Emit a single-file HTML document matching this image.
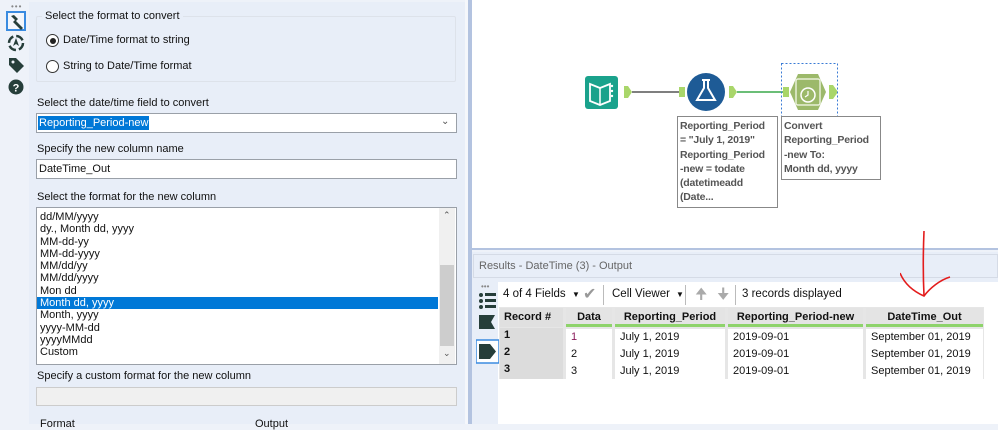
<!DOCTYPE html>
<html><head><meta charset="utf-8"><style>
*{margin:0;padding:0;box-sizing:border-box}
body{width:998px;height:424px;overflow:hidden;background:#eef2f9;font-family:"Liberation Sans",sans-serif;font-size:11px;color:#111;position:relative}
.a{position:absolute}
.lbl{position:absolute;left:37px;font-size:11px}
.box{position:absolute;background:#fff;border:1px solid #9aa0a8}
.li{height:12.3px;line-height:12.3px;padding-left:3px;font-size:11px}
.cell{position:absolute;height:17px;line-height:17px;padding-left:5px;background:#fff;font-size:11px}
.hd{position:absolute;height:19px;line-height:18px;text-align:center;background:#e4e4e4;font-weight:bold;border-bottom:3px solid #8ed36b;font-size:11px}
.rn{position:absolute;height:17px;line-height:15px;padding-left:4px;background:#dcdcdc;font-weight:bold;font-size:11px}
.note{position:absolute;background:#fff;border:1px solid #888;color:#555;font-weight:bold;font-size:10.5px;line-height:14.3px;padding:2px 2px;letter-spacing:-0.2px;white-space:nowrap;overflow:hidden}
</style></head><body>
<div class="a" style="left:0;top:0;width:30px;height:424px;background:#eef2f9"></div>
<div class="a" style="left:11px;top:2px;color:#888;font-size:8px;letter-spacing:1px">•••</div>
<div class="a" style="left:6px;top:11px;width:20px;height:20px;border:2px solid #3a8be0;background:#f3f6fb"></div>
<svg class="a" style="left:6px;top:11px" width="22" height="90" viewBox="0 0 22 90">
<path d="M5 5 l3 -1 4 4 -2 2 -4 -4z M9 9 l8 8 -2 2 -8 -8z" fill="#263e3a"/>
<circle cx="10" cy="32" r="7" fill="none" stroke="#263e3a" stroke-width="2.5" stroke-dasharray="8 3"/>
<path d="M7 35 l3 -8 3 8 -3 -2z" fill="#263e3a"/>
<path d="M3 47 l7 0 8 8 -7 7 -8 -8z" fill="#263e3a"/><circle cx="7" cy="51" r="1.5" fill="#eef2f9"/>
<circle cx="10" cy="76" r="7.5" fill="#263e3a"/><text x="10" y="80.5" font-size="11" font-weight="bold" fill="#fff" text-anchor="middle" font-family="Liberation Sans">?</text>
</svg>
<div class="a" style="left:29px;top:2px;width:436px;height:422px;background:#e8eef8"></div>
<div class="a" style="left:36px;top:16px;width:420px;height:66px;border:1px solid #dde2ea;border-radius:2px"></div>
<div class="a" style="left:42px;top:10px;background:#e8eef8;padding:0 3px">Select the format to convert</div>
<div class="a" style="left:46px;top:34px;width:13px;height:13px;border:1px solid #333;border-radius:50%;background:#fff"></div>
<div class="a" style="left:49.5px;top:37.5px;width:6px;height:6px;border-radius:50%;background:#222"></div>
<div class="a" style="left:63px;top:34px">Date/Time format to string</div>
<div class="a" style="left:46px;top:60px;width:13px;height:13px;border:1px solid #333;border-radius:50%;background:#fff"></div>
<div class="a" style="left:63px;top:60px">String to Date/Time format</div>
<div class="lbl" style="top:97px">Select the date/time field to convert</div>
<div class="box" style="left:36px;top:113px;width:421px;height:20px"></div>
<div class="a" style="left:38px;top:116px;background:#0078d7;color:#fff;padding:0 1px;line-height:14px">Reporting_Period-new</div>
<div class="a" style="left:441px;top:116px;color:#555;font-size:10px">&#8964;</div>
<div class="lbl" style="top:143px">Specify the new column name</div>
<div class="box" style="left:36px;top:159px;width:421px;height:20px;padding:3px 2px">DateTime_Out</div>
<div class="lbl" style="top:191px">Select the format for the new column</div>
<div class="box" style="left:36px;top:207px;width:421px;height:158px;padding-top:3px">
<div class="li">dd/MM/yyyy</div><div class="li">dy., Month dd, yyyy</div><div class="li">MM-dd-yy</div><div class="li">MM-dd-yyyy</div><div class="li">MM/dd/yy</div><div class="li">MM/dd/yyyy</div><div class="li">Mon dd</div>
<div class="li" style="background:#0078d7;color:#fff;width:401px">Month dd, yyyy</div>
<div class="li">Month, yyyy</div><div class="li">yyyy-MM-dd</div><div class="li">yyyyMMdd</div><div class="li">Custom</div>
</div>
<div class="a" style="left:439px;top:208px;width:16px;height:156px;background:#f0f0f0"></div>
<div class="a" style="left:440px;top:265px;width:14px;height:81px;background:#cdcdcd"></div>
<div class="a" style="left:443px;top:210px;font-size:9px;color:#555">&#8963;</div>
<div class="a" style="left:443px;top:348px;font-size:9px;color:#555">&#8964;</div>
<div class="lbl" style="top:370px">Specify a custom format for the new column</div>
<div class="a" style="left:36px;top:387px;width:421px;height:19px;background:#f0f0f0;border:1px solid #ccc"></div>
<div class="a" style="left:40px;top:418px;font-size:11px">Format</div>
<div class="a" style="left:255px;top:418px;font-size:11px">Output</div>
<div class="a" style="left:465px;top:0;width:3px;height:424px;background:#f5f7fb"></div>
<div class="a" style="left:468px;top:0;width:4px;height:424px;background:#b3c3e0"></div>
<div class="a" style="left:472px;top:0;width:526px;height:250px;background:#fff;border-bottom:2px solid #b3c3e0"></div>
<svg class="a" style="left:570px;top:55px" width="280" height="70" viewBox="570 55 280 70">
<rect x="585" y="76" width="33" height="33" rx="3" fill="#1aa28c"/>
<path d="M590 84 l10 4 10 -4 v17 l-10 4 -10 -4z" fill="none" stroke="#fff" stroke-width="1.8"/><path d="M600 88 v17" stroke="#fff" stroke-width="1.5"/>
<circle cx="612" cy="86" r="1.2" fill="#fff"/><circle cx="612" cy="91" r="1.2" fill="#fff"/><circle cx="612" cy="96" r="1.2" fill="#fff"/>
<path d="M624 86 h4 l4 6 -4 6 h-4z" fill="#a9d66a"/>
<line x1="632" y1="92" x2="680" y2="92" stroke="#555" stroke-width="1.5"/>
<rect x="679" y="87" width="6" height="10" fill="#a9d66a"/>
<circle cx="706" cy="92" r="19" fill="#1e5b96"/>
<path d="M702 80 h8 M704 80 v8 l-7 12 h18 l-7 -12 v-8" fill="none" stroke="#fff" stroke-width="2"/>
<circle cx="706" cy="94" r="2" fill="none" stroke="#1e5b96"/>
<path d="M729 86 h4 l4 6 -4 6 h-4z" fill="#a9d66a"/>
<line x1="737" y1="92" x2="784" y2="92" stroke="#3aa94a" stroke-width="1.5"/>
<rect x="783" y="87" width="6" height="10" fill="#a9d66a"/>
<path d="M798 74 h20 l8 18 -8 18 h-20 l-8 -18z" fill="#9cb96a"/>
<rect x="796" y="79" width="24" height="26" rx="2" fill="none" stroke="#e8f0d8" stroke-width="1.5"/>
<circle cx="808" cy="95" r="7" fill="none" stroke="#fff" stroke-width="1.5"/><path d="M808 91 v4 l-3 2" stroke="#fff" fill="none" stroke-width="1.2"/>
<path d="M829 85 h4 l5 7 -5 7 h-4z" fill="#a9d66a"/>
<rect x="781.5" y="63.5" width="56" height="53" fill="none" stroke="#3a7bd5" stroke-dasharray="2 2"/>
</svg>
<div class="note" style="left:677px;top:116px;width:101px;height:92px">Reporting_Period<br>= "July 1, 2019"<br>Reporting_Period<br>-new = todate<br>(datetimeadd<br>(Date...</div>
<div class="note" style="left:781px;top:116px;width:100px;height:64px">Convert<br>Reporting_Period<br>-new To:<br>Month dd, yyyy</div>
<div class="a" style="left:472px;top:252px;width:526px;height:172px;background:#e8eef8"></div>
<div class="a" style="left:473px;top:254px;width:525px;height:24px;border:1px solid #d5dbe6;background:#e8eef8;color:#666;padding:5px 5px;font-size:11px">Results - DateTime (3) - Output</div>
<div class="a" style="left:498px;top:282px;width:500px;height:142px;background:#fff"></div>
<div class="a" style="left:481px;top:282px;color:#888;font-size:8px">•••</div>
<svg class="a" style="left:476px;top:290px" width="24" height="80" viewBox="0 0 24 80">
<g fill="#263e3a"><circle cx="5" cy="5" r="2"/><rect x="9" y="3" width="11" height="3"/><circle cx="5" cy="11" r="2"/><rect x="9" y="9" width="11" height="3"/><circle cx="5" cy="17" r="2"/><rect x="9" y="15" width="11" height="3"/>
<path d="M3 25 h16 l-4 7 4 7 h-16z"/></g>
<rect x="0" y="50" width="23" height="23" fill="#fff" stroke="#3a8be0" stroke-width="1.5"/>
<path d="M3 54 h11 l6 7.5 -6 7.5 h-11z" fill="#263e3a"/>
</svg>
<div class="a" style="left:503px;top:288px;font-size:11.5px">4 of 4 Fields</div>
<div class="a" style="left:572px;top:290px;font-size:8px">&#9660;</div>
<div class="a" style="left:583px;top:284px;font-size:16px;color:#999">&#10004;</div>
<div class="a" style="left:603px;top:285px;width:1px;height:20px;background:#bbb"></div>
<div class="a" style="left:612px;top:288px;font-size:11.5px">Cell Viewer</div>
<div class="a" style="left:676px;top:290px;font-size:8px">&#9660;</div>
<div class="a" style="left:685px;top:285px;width:1px;height:20px;background:#bbb"></div>
<div class="a" style="left:695px;top:284px;font-size:15px;color:#aaa">&#129033;</div>
<div class="a" style="left:717px;top:284px;font-size:15px;color:#aaa">&#129035;</div>
<div class="a" style="left:735px;top:285px;width:1px;height:20px;background:#bbb"></div>
<div class="a" style="left:742px;top:288px;font-size:11.5px">3 records displayed</div>
<div class="a" style="left:499px;top:307px;width:485px;height:72px;background:#e6e6e6"></div>
<div class="rn" style="left:500px;top:308px;width:63px;height:19px;line-height:18px;background:#e0e0e0">Record #</div>
<div class="hd" style="left:566px;top:308px;width:46px">Data</div>
<div class="hd" style="left:615px;top:308px;width:110px">Reporting_Period</div>
<div class="hd" style="left:728px;top:308px;width:135px">Reporting_Period-new</div>
<div class="hd" style="left:866px;top:308px;width:117px">DateTime_Out</div>
<div class="rn" style="left:500px;top:328px;width:63px">1</div>
<div class="cell" style="left:566px;top:329px;width:46px;color:#8a1b5a">1</div>
<div class="cell" style="left:615px;top:329px;width:110px">July 1, 2019</div>
<div class="cell" style="left:728px;top:329px;width:135px">2019-09-01</div>
<div class="cell" style="left:866px;top:329px;width:117px">September 01, 2019</div>
<div class="rn" style="left:500px;top:345px;width:63px">2</div>
<div class="cell" style="left:566px;top:346px;width:46px">2</div>
<div class="cell" style="left:615px;top:346px;width:110px">July 1, 2019</div>
<div class="cell" style="left:728px;top:346px;width:135px">2019-09-01</div>
<div class="cell" style="left:866px;top:346px;width:117px">September 01, 2019</div>
<div class="rn" style="left:500px;top:362px;width:63px">3</div>
<div class="cell" style="left:566px;top:363px;width:46px">3</div>
<div class="cell" style="left:615px;top:363px;width:110px">July 1, 2019</div>
<div class="cell" style="left:728px;top:363px;width:135px">2019-09-01</div>
<div class="cell" style="left:866px;top:363px;width:117px">September 01, 2019</div>
<svg class="a" style="left:900px;top:225px" width="60" height="75" viewBox="900 225 60 75">
<path d="M924 231 C923 255 923 275 924 296" stroke="#e31c1c" stroke-width="1.6" fill="none"/>
<path d="M900 273 C905 285 915 292 924 296 C930 288 940 280 950 277" stroke="#e31c1c" stroke-width="1.6" fill="none"/>
</svg>
</body></html>
